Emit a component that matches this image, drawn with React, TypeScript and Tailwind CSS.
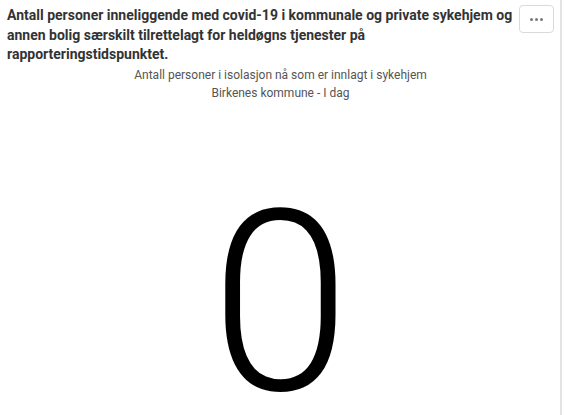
export default function App() {
  return (
    <div className="h-[415px] w-[564px] overflow-hidden bg-white" style={{ fontFamily: "Roboto, 'Noto Sans', sans-serif" }}>
      <div className="h-full w-[562px] border-r-2 border-[#e3e3e3] pl-[7px] pr-[6px] pt-[5px]">
        <div className="flex items-start gap-[2px]">
          <h2 className="flex-1 pt-[1px] text-[14px] font-bold leading-[19.5px] text-[#333333]">
            Antall personer inneliggende med covid-19 i kommunale og private sykehjem og annen bolig særskilt tilrettelagt for heldøgns tjenester på rapporteringstidspunktet.
          </h2>
          <button className="flex h-[28px] w-[35px] shrink-0 items-center justify-center gap-[2px] rounded-[4px] border border-[#dadada] bg-white">
            <span className="h-[3px] w-[3px] rounded-full bg-[#777]" />
            <span className="h-[3px] w-[3px] rounded-full bg-[#777]" />
            <span className="h-[3px] w-[3px] rounded-full bg-[#777]" />
          </button>
        </div>
        <div className="mt-[1px] text-center text-[12px] leading-[18px] text-[#555555]">
          <p>Antall personer i isolasjon nå som er innlagt i sykehjem</p>
          <p>Birkenes kommune - I dag</p>
        </div>
        <div className="mt-[76px] text-center text-[252px] font-light leading-none text-black">0</div>
      </div>
    </div>
  );
}
